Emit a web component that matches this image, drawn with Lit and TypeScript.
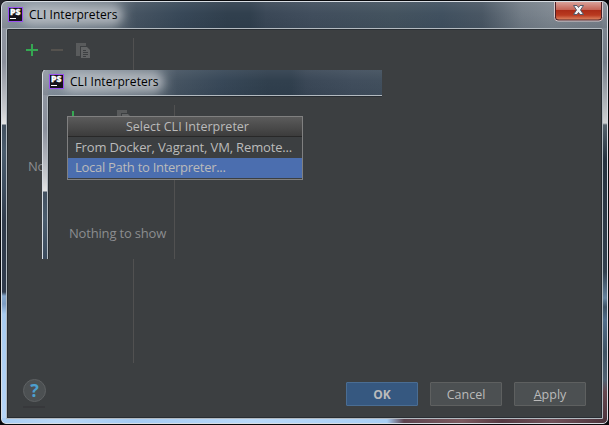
import { LitElement, html, css, svg, nothing } from "lit";
import { customElement, property } from "lit/decorators.js";

const plusIcon = svg`<path d="M0 6h12M6 0v12" stroke="#35a852" stroke-width="2"/>`;
const minusIcon = svg`<path d="M0 6h12" stroke="#55524e" stroke-width="2"/>`;

@customElement("dialog-window")
class DialogWindow extends LitElement {
  @property({ type: Boolean }) footless = false;

  static styles = css`
    :host {
      display: block;
      width: 609px;
      height: 425px;
      background: #08090c;
      font-family: "Open Sans", "Noto Sans", sans-serif;
    }
    .frame {
      box-sizing: border-box;
      height: 425px;
      padding: 1px;
      background: radial-gradient(circle at 0 0, #26262c 3px, #08090c 8px);
    }
    .glass {
      position: relative;
      box-sizing: border-box;
      width: 607px;
      height: 423px;
      border: 1px solid #d8dde3;
      border-radius: 6px 6px 5px 5px;
      padding: 26px 4px 4px;
      overflow: hidden;
      display: flex;
      background:
        linear-gradient(90deg, #a8cdf3 0, #b9d8f7 55px, #a5cbf3 130px, #b9d9f9 250px, #a9cff5 385px, #5e4450 402px, #7d5a60 460px, #553942 500px, #71515a 550px, #4c333c 100%) 0 100% / 100% 5px no-repeat,
        linear-gradient(180deg, #9299a3 0, #8a8f9b 60px, #c9cbcf 108px, #e4e4e4 122px, #43505f 123px, #4a5c6d 150px, #3d4d5f 185px, #303b4b 220px, #303b4c 290px, #86a8cd 294px, #7d9cc2 302px, #a8cbef 312px, #b7d6f8 100%) 0 0 / 5px 100% no-repeat,
        linear-gradient(180deg, #858c96 0, #727b86 60px, #cfd0d2 121px, #56626c 123px, #26323f 158px, #33404e 270px, #67839e 296px, #3f5263 305px, #526e8b 318px, #3f5262 350px, #526272 378px, #67474f 390px, #4c333c 100%) 100% 0 / 5px 100% no-repeat,
        linear-gradient(90deg, #8b96a2 0, #7d8994 60px, #68747f 110px, #465462 134px, #384858 180px, #31404e 225px, #31404e 248px, #3b4857 264px, #414e5d 310px, #44535f 390px, #415160 440px, #4a5764 480px, #737d87 520px, #7f8891 550px, #78808a 100%);
    }
    .shade {
      position: absolute;
      inset: 0 0 auto 0;
      height: 26px;
      background: linear-gradient(180deg, #ffffff10, #ffffff00 45%, #0d1c2b18);
    }
    .title {
      position: absolute;
      left: 5px;
      top: 4px;
      display: flex;
      align-items: center;
      gap: 5px;
      height: 17px;
      font-size: 12px;
      color: #000;
    }
    .halo {
      position: absolute;
      left: 14px;
      top: -1px;
      width: 102px;
      height: 20px;
      border-radius: 10px;
      background: #c2c6cbc0;
      filter: blur(5px);
    }
    .name {
      position: relative;
      letter-spacing: 0.06px;
      line-height: 17px;
      white-space: nowrap;
    }
    .logo { position: relative; display: block; }
    .close {
      position: absolute;
      right: 4px;
      top: 0;
      display: block;
    }
    .body {
      flex: 1;
      position: relative;
      box-sizing: border-box;
      border: 1px solid #b3bac0;
      border-radius: 2px 2px 0 0;
      box-shadow: inset 0 0 0 1px #282d32;
      background: #3c3f41;
      display: flex;
      flex-direction: column;
      justify-content: space-between;
    }
    .side {
      box-sizing: border-box;
      width: 127px;
      height: 325px;
      margin-top: 9px;
      border-right: 1px solid #515151;
      padding: 5px 0 0 19px;
    }
    .tools { display: flex; height: 15px; }
    .tools svg { display: block; }
    .empty {
      margin: 99px 0 0 2px;
      color: #8b8d8f;
      font-size: 13px;
      line-height: 18px;
      letter-spacing: -0.18px;
      white-space: nowrap;
    }
    .footer {
      display: flex;
      align-items: flex-start;
      height: 36px;
      padding: 0 16px 0 15px;
      gap: 12px;
    }
    .help { display: block; margin: -4px auto 0 0; }
    .btn {
      box-sizing: border-box;
      width: 72px;
      height: 24px;
      border: 1px solid #5e6060;
      background: #4c5052;
      color: #bbb;
      font-size: 12.5px;
      line-height: 23px;
      text-align: center;
      border-radius: 1px;
    }
    .primary {
      background: #365880;
      border-color: #4a6d93;
      font-weight: 700;
      font-size: 12px;
    }
  `;

  render() {
    return html`
      <div class="frame">
        <div class="glass">
          <div class="shade"></div>
          <div class="title">
            <div class="halo"></div>
            <svg class="logo" width="17" height="17" viewBox="0 0 17 17">
              <rect x="1.500" y="1.500" width="14" height="14" fill="#16131a" stroke="#9a50f0"/>
              <text x="3" y="9" font-family="Open Sans" font-size="8.2" font-weight="800" fill="#fff" stroke="#fff" stroke-width=".3" textLength="10.5" lengthAdjust="spacingAndGlyphs">PS</text>
              <path d="M3 12.500h6" stroke="#fff"/>
            </svg>
            <span class="name">CLI Interpreters</span>
          </div>
          <svg class="close" width="49" height="20" viewBox="0 0 49 20">
            <defs>
              <linearGradient id="red" x2="0" y2="1">
                <stop offset="0" stop-color="#d9a199"/>
                <stop offset=".43" stop-color="#c56658"/>
                <stop offset=".47" stop-color="#ac2c18"/>
                <stop offset=".75" stop-color="#b93a20"/>
                <stop offset="1" stop-color="#dc8360"/>
              </linearGradient>
            </defs>
            <path d="M.5 0V15.500Q.5 19 4 19H45Q48.500 19 48.500 15.500V0" fill="#4d2026" stroke="#d9c8ca"/>
            <path d="M2 0H47V15Q47 17.500 44 17.500H5Q2 17.500 2 15Z" fill="url(#red)"/>
            <path d="M19.500 3.500h3.500l1.500 2 1.500-2h3.500l-3 4.500 3 4.500h-3.500l-1.500-2-1.500 2h-3.500l3-4.500z" fill="#f2f2f4" stroke="#545b6b"/>
          </svg>
          <div class="body">
            <div class="side">
              <div class="tools">
                <svg width="70" height="16" viewBox="0 0 70 16">
                  <g transform="translate(0 1)">${plusIcon}</g>
                  <g transform="translate(25 1)">${minusIcon}</g>
                  <path d="M50 0h10v3h-6v10h-4z" fill="#595b5c"/>
                  <path d="M55 4h6l3 3v8h-9z" fill="#626465"/>
                  <path d="M57 7.500h3M57 9.500h5M57 11.500h5M57 13.500h3" stroke="#3c3f41"/>
                </svg>
              </div>
              <div class="empty">Nothing to show</div>
            </div>
            ${this.footless
              ? nothing
              : html`<div class="footer">
                  <svg class="help" width="25" height="30" viewBox="0 0 25 30">
                    <circle cx="12.500" cy="12.500" r="11" fill="#4c5052" stroke="#5e6163"/>
                    <path d="M1 29h22" stroke="#36373a" stroke-width="1.500"/>
                    <text x="12.500" y="18.500" text-anchor="middle" font-family="Open Sans" font-weight="700" font-size="18" fill="#4d9fce">?</text>
                  </svg>
                  <div class="btn primary">OK</div>
                  <div class="btn">Cancel</div>
                  <div class="btn"><u>A</u>pply</div>
                </div>`}
          </div>
        </div>
      </div>
    `;
  }
}

@customElement("app-root")
class AppRoot extends LitElement {
  static styles = css`
    :host {
      display: block;
      position: relative;
      width: 609px;
      height: 425px;
      overflow: hidden;
      font-family: "Open Sans", "Noto Sans", sans-serif;
    }
    .nested {
      position: absolute;
      left: 42px;
      top: 70px;
      width: 340px;
      height: 189px;
      overflow: hidden;
    }
    .nested dialog-window { margin: -3px 0 0 -1px; }
    .popup {
      position: absolute;
      left: 67px;
      top: 116px;
      box-sizing: border-box;
      width: 236px;
      height: 64px;
      border: 1px solid #808080;
      background: #3c3f41;
      color: #bbb;
      font-size: 13px;
      white-space: nowrap;
    }
    .head {
      box-sizing: border-box;
      height: 20px;
      border-bottom: 1px solid #282828;
      background: linear-gradient(#5b5b5b, #3c3c3c);
      padding-left: 58px;
      line-height: 20px;
      font-size: 12.5px;
    }
    .row {
      height: 20px;
      line-height: 19px;
      padding-left: 7px;
      letter-spacing: -0.28px;
    }
    .first {
      height: 21px;
      line-height: 20px;
      letter-spacing: -0.15px;
    }
    .selected { background: #4b6eaf; }
  `;

  render() {
    return html`
      <dialog-window></dialog-window>
      <div class="nested"><dialog-window footless></dialog-window></div>
      <div class="popup">
        <div class="head">Select CLI Interpreter</div>
        <div class="row first">From Docker, Vagrant, VM, Remote...</div>
        <div class="row selected">Local Path to Interpreter...</div>
      </div>
    `;
  }
}
